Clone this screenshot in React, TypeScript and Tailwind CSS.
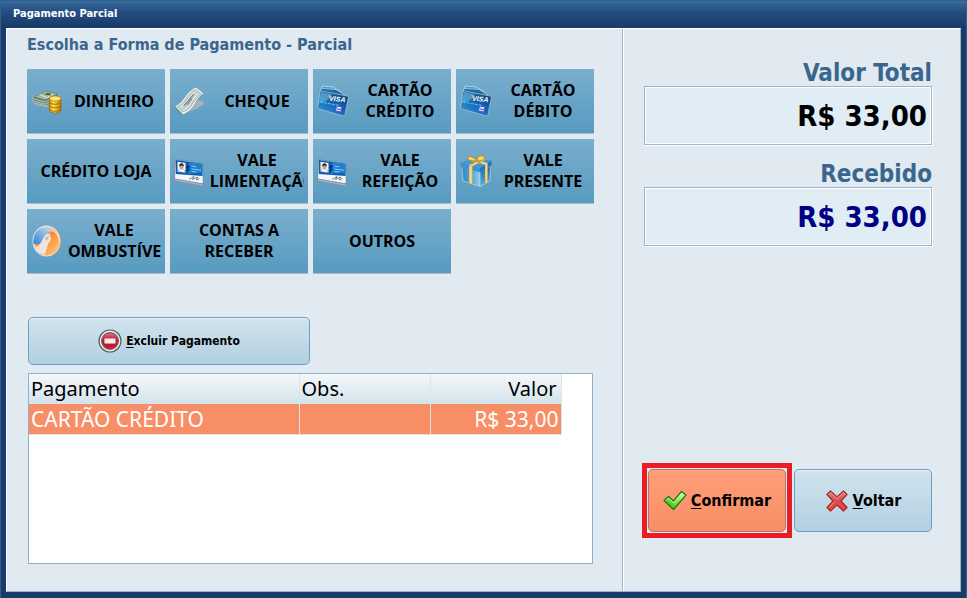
import type { ReactNode } from 'react';

function MoneyIcon() {
  return (
    <svg viewBox="0 0 32 32" className="h-8 w-8 shrink-0" aria-hidden="true">
      <defs>
        <linearGradient id="gold" x1="0" x2="1">
          <stop offset="0" stopColor="#d99a08" />
          <stop offset=".35" stopColor="#ffe45c" />
          <stop offset="1" stopColor="#b87400" />
        </linearGradient>
      </defs>
      <path d="M2 12 9 8l9-2 9 3 1 8-10 5-12-2-4-3z" fill="#6d8878" stroke="#c3d0cb" strokeWidth=".6" />
      <path d="M3 12l6-3.500 8-2.500 10 3-6 3-7 3z" fill="#a0b5a3" stroke="#4f6a58" strokeWidth=".6" />
      <path d="M9 9.500l6 3 4-1M14 7.500l8 2.500" fill="none" stroke="#d6e0d3" strokeWidth="1.200" />
      <ellipse cx="17" cy="9" rx="3" ry="1.300" fill="#4f6b58" />
      <path d="M3 14l11 3 4-2M3 16.200l11 3 4-2M4 18.200l11 2.500 3-1" fill="none" stroke="#c0cfc4" strokeWidth=".8" />
      <path d="M18.500 13.500V25c0 4 11.500 4 11.500 0V13.500z" fill="url(#gold)" stroke="#936000" strokeWidth=".7" />
      <path d="M18.500 17c1 3 10.500 3 11.500 0M18.500 20.500c1 3 10.500 3 11.500 0M18.500 24c1 3 10.500 3 11.500 0" fill="none" stroke="#a56d00" />
      <ellipse cx="24.200" cy="13.500" rx="5.700" ry="2.600" fill="#ffe679" stroke="#b07700" strokeWidth=".7" />
    </svg>
  );
}

function ChequeIcon() {
  return (
    <svg viewBox="0 0 32 32" className="h-8 w-8 shrink-0" aria-hidden="true">
      <path d="M13 27 22 15l7 1 1 3-8 5z" fill="#a8b3bc" />
      <path d="M0 21c7-2 9-7 13-12 3-3 6-6 9-7l8.500 7c-5 1-7 6-10 11-3 5-7 8-12 10z" fill="#eef4f4" stroke="#6f979d" strokeWidth=".8" />
      <path d="M3 21.500c6-2 8-7 12-12 2-2 4-4 6.500-5l6 4.500c-4 2-6 6-9 10-2 4-6 7-10 8z" fill="#c3d0d0" stroke="#86a3a6" strokeWidth=".6" />
      <path d="M6 22.500c6-3 8-10 15-15.500M9 25.500c7-3 8-11 15-16.500" fill="none" stroke="#eff5f5" strokeWidth=".9" />
      <path d="M10 20.500c4-4 6-8 10-11M13 20c2-2 3-4 5-6.500" fill="none" stroke="#75868a" strokeWidth="1.200" />
      <path d="M0 21l8.500 9" stroke="#5e9196" strokeWidth="1.400" />
    </svg>
  );
}

function VisaIcon() {
  return (
    <svg viewBox="0 0 32 32" className="h-8 w-8 shrink-0" aria-hidden="true">
      <defs>
        <linearGradient id="card" x1="0" y1="1" x2="1" y2="0">
          <stop offset="0" stopColor="#2a9fe0" />
          <stop offset=".5" stopColor="#1467b5" />
          <stop offset="1" stopColor="#0b3a78" />
        </linearGradient>
      </defs>
      <path d="M5 1l11 1 8 5-3 14L1 20z" fill="#3fa0d3" stroke="#cfdde6" strokeWidth=".8" />
      <path d="M4 3.500l15 1 8 5-4 14L1 21z" fill="#1b67a6" stroke="#b9cddb" strokeWidth=".8" />
      <path d="M4.500 6 30 11c1 0 1.500 1 1.300 2L28 29.500c-.3 1-1 1.500-2 1.300L2 24c-1-.4-1.500-1-1.300-2L3 7c.2-.7.700-1 1.500-1z" fill="url(#card)" stroke="#a9bccb" strokeWidth=".8" />
      <path d="M4 7l11 2c-2 5-6 8-13 9z" fill="#6fc6ea" opacity=".55" />
      <text x="12" y="15.500" transform="rotate(6 12 15)" fontSize="7" fontWeight="700" fontStyle="italic" fontFamily="Liberation Sans, sans-serif" fill="#fff">VISA</text>
      <path d="M11 10l2.500.5 1 3-2-.5z" fill="#f6ac38" />
      <path d="M3 17l19 3.500" stroke="#6fb4e6" strokeWidth="1.200" strokeDasharray="3 1" />
      <path d="M19.500 21l5.500 1-1 5-5.500-1z" fill="#d9e2ff" stroke="#4d57c9" />
      <path d="M20 24l4.500.7" stroke="#4d57c9" />
    </svg>
  );
}

function BadgeCardIcon() {
  return (
    <svg viewBox="0 0 32 32" className="h-8 w-8 shrink-0" aria-hidden="true">
      <path d="M1.500 4.500 28 8.500c1 .2 1.200.8 1.200 1.500v19L.5 24z" fill="#f2f6fb" stroke="#6d7f92" strokeWidth=".8" />
      <path d="M2 5l26.500 4v12L1.800 19z" fill="#0a5cb0" />
      <path d="M15 7l13.500 2v9C23 19 19 17 14 20z" fill="#1d7fd0" />
      <path d="M3.500 6.700l8 1.200v9.600l-8-.8z" fill="#f1f5f8" />
      <path d="M4 16.800c0-4 7-4 7 .6z" fill="#fff" stroke="#56768f" strokeWidth=".5" />
      <ellipse cx="7.500" cy="11.600" rx="2.100" ry="2.600" fill="#dd9a70" />
      <path d="M5.200 11.500c-.4-4.500 5-4 4.600 0-1.600-1.300-3-1.300-4.600 0z" fill="#32221b" />
      <path d="M17.500 11l5 .8M17.500 14l9.500 1.200M17.500 16.500l5 .5" stroke="#8cc8f4" />
      <path d="M12.500 13l3-2M12.500 16l3-2" stroke="#072d66" strokeWidth="1.600" />
      <path d="M15 24.500l5-3-1.500 3 5-2.500-1 3 3-1.500" fill="none" stroke="#283747" strokeWidth=".6" />
      <path d="M.5 24l28.500 5v2L1 26z" fill="#aeb6c0" stroke="#7d8794" strokeWidth=".5" />
    </svg>
  );
}

function GiftIcon() {
  return (
    <svg viewBox="0 0 32 32" className="h-8 w-8 shrink-0" aria-hidden="true">
      <defs>
        <linearGradient id="giftLeft" x1="0" x2="1">
          <stop offset="0" stopColor="#2c86c8" />
          <stop offset=".6" stopColor="#57aee2" />
          <stop offset="1" stopColor="#8ecdf0" />
        </linearGradient>
        <linearGradient id="giftRight" x1="0" x2="0" y1="0" y2="1">
          <stop offset="0" stopColor="#1667ad" />
          <stop offset="1" stopColor="#56b1e4" />
        </linearGradient>
      </defs>
      <path d="M2 12l18 5v14.500L3 26z" fill="url(#giftLeft)" stroke="#c2d3df" strokeWidth=".7" />
      <path d="M20 17l10.500-6L30 26l-10 5.500z" fill="url(#giftRight)" stroke="#c2d3df" strokeWidth=".7" />
      <path d="M.5 7.500 14 3.500l17 2-11 7.500z" fill="#4199d6" />
      <path d="M.5 7.500 20 13v4.500L1 12.500z" fill="#3b93d2" />
      <path d="M20 13l11.500-7.500v5L20 17.500z" fill="#1f74ba" />
      <path d="M9 10l3.500 1v18.500L9 28.300zM25 9.800l2.700-1.800v19.500L25 29z" fill="#f3d681" stroke="#b78928" strokeWidth=".4" />
      <path d="M9 10l13-5.500h4L12.500 11zM12 4.500l15.700 3.500L25 9.800 9 5.500z" fill="#f7dc82" />
      <path d="M16.500 6C10 6 7 5 8 2.500 9 0 15 2 16.500 6zm0 0C17 1 21-.5 24 1.500c3 2-2 5-7.500 4.500z" fill="#f6d36b" stroke="#a97922" strokeWidth=".8" />
      <path d="M15.500 6 12 9M17.500 6l4 3" stroke="#c69232" strokeWidth="1.600" />
      <circle cx="16.500" cy="5.500" r="1.700" fill="#cf942c" />
    </svg>
  );
}

function FuelIcon() {
  return (
    <svg viewBox="0 0 32 32" className="h-8 w-8 shrink-0" aria-hidden="true">
      <defs>
        <linearGradient id="ember" x1="0" x2="1" y1="0" y2="1">
          <stop offset="0" stopColor="#f3a77a" />
          <stop offset=".45" stopColor="#ff8a2b" />
          <stop offset="1" stopColor="#ffd089" />
        </linearGradient>
        <linearGradient id="sky" x1="0" x2="1" y1="1" y2="0">
          <stop offset="0" stopColor="#2a86d6" />
          <stop offset="1" stopColor="#cfe0ee" />
        </linearGradient>
      </defs>
      <ellipse cx="17" cy="16" rx="14" ry="15.500" fill="#8e99a2" />
      <ellipse cx="15.500" cy="16" rx="14" ry="15.600" fill="#dfe2e5" />
      <ellipse cx="16" cy="16.500" rx="12.500" ry="14" fill="url(#ember)" />
      <path d="M2.500 19C1.500 10 6 3 13.500 2.500 18 2 21 4 23 6c-6 0-11 6-13 13z" fill="url(#sky)" />
      <path d="M4 22c5-1 6-5 8-8.500C14 9 17 8 19 9l1 5c-.5 3-3 4-3.500 7L14 29.500C9 29 5 26 4 22z" fill="#f3e3da" />
      <path d="M14.500 12.500l3.500-2-1 4-3 1z" fill="#b3bfca" />
      <path d="M21 5c4 2 7 6 7.500 11" fill="none" stroke="#ffe2d0" strokeWidth="1.200" />
    </svg>
  );
}

function RemoveIcon() {
  return (
    <svg viewBox="0 0 24 24" className="h-6 w-6 shrink-0" aria-hidden="true">
      <defs>
        <linearGradient id="stop" x1="0" x2="0" y1="0" y2="1">
          <stop offset="0" stopColor="#e4788a" />
          <stop offset=".5" stopColor="#cf0426" />
          <stop offset="1" stopColor="#d6173b" />
        </linearGradient>
      </defs>
      <circle cx="12" cy="12" r="11" fill="#f1efee" stroke="#5f5a59" strokeWidth="1.200" />
      <circle cx="12" cy="12" r="8.300" fill="url(#stop)" stroke="#6f6464" strokeWidth="1.400" />
      <rect x="6.500" y="9.500" width="11" height="5" rx=".8" fill="#eee" stroke="#c9a0a8" strokeWidth=".7" />
    </svg>
  );
}

function CheckIcon() {
  return (
    <svg viewBox="0 0 24 24" className="h-6 w-6 shrink-0" aria-hidden="true">
      <defs>
        <linearGradient id="green" x1="1" x2="0" y1="0" y2="1">
          <stop offset="0" stopColor="#eaffcf" />
          <stop offset=".45" stopColor="#85e943" />
          <stop offset="1" stopColor="#23a80d" />
        </linearGradient>
      </defs>
      <path d="M1 11.500 5.500 7.500l5 4.500L18.500 2.500 23 6 10.500 20.500z" fill="url(#green)" stroke="#187b12" strokeWidth="1.200" strokeLinejoin="round" />
      <path d="M3 11.500 5.500 9l5 5 8-9.500" fill="none" stroke="#e2ffd1" strokeWidth=".8" />
    </svg>
  );
}

function CrossIcon() {
  return (
    <svg viewBox="0 0 24 24" className="h-6 w-6 shrink-0" aria-hidden="true">
      <defs>
        <linearGradient id="red" x1="0" x2="0" y1="0" y2="1">
          <stop offset="0" stopColor="#dc8583" />
          <stop offset=".55" stopColor="#d94a48" />
          <stop offset="1" stopColor="#f04742" />
        </linearGradient>
      </defs>
      <path d="M2 5.500 5.500 2 12 8l6.500-6L22 5.500 16 12l6 6.500-3.500 3.500L12 16l-6.500 6L2 18.500 8 12z" fill="url(#red)" stroke="#ae2525" strokeWidth="1.200" strokeLinejoin="round" />
      <path d="M3.500 5.500l2-2L12 9.500l6.500-6 2 2M4 18.500l5.500-6" fill="none" stroke="#f0b0ad" strokeWidth=".7" />
    </svg>
  );
}

type Method = { lines: string[]; icon?: ReactNode };

const methods: Method[] = [
  { lines: ['DINHEIRO'], icon: <MoneyIcon /> },
  { lines: ['CHEQUE'], icon: <ChequeIcon /> },
  { lines: ['CARTÃO', 'CRÉDITO'], icon: <VisaIcon /> },
  { lines: ['CARTÃO', 'DÉBITO'], icon: <VisaIcon /> },
  { lines: ['CRÉDITO LOJA'] },
  { lines: ['VALE', 'ALIMENTAÇÃO'], icon: <BadgeCardIcon /> },
  { lines: ['VALE', 'REFEIÇÃO'], icon: <BadgeCardIcon /> },
  { lines: ['VALE', 'PRESENTE'], icon: <GiftIcon /> },
  { lines: ['VALE', 'COMBUSTÍVEL'], icon: <FuelIcon /> },
  { lines: ['CONTAS A', 'RECEBER'] },
  { lines: ['OUTROS'] },
];

function MethodTile({ lines, icon }: Method) {
  return (
    <button
      type="button"
      className="flex h-[65px] items-center gap-1 border-b border-[#a9bccb] bg-linear-to-b from-[#7aaecd] to-[#579bc0] px-1 font-['Open_Sans',sans-serif] text-base leading-[21px] font-bold text-black"
    >
      {icon}
      <span className="flex min-w-0 flex-1 flex-col items-center overflow-hidden whitespace-nowrap">
        {lines.map((line) => (
          <span key={line}>{line}</span>
        ))}
      </span>
    </button>
  );
}

function AmountField({ id, label, color }: { id: string; label: string; color: string }) {
  return (
    <div className="flex flex-col">
      <label htmlFor={id} className="text-right text-2xl leading-[26px] font-bold text-[#3a668e]">
        {label}
      </label>
      <input
        id={id}
        readOnly
        value="R$ 33,00"
        className={`h-[59px] w-full border border-[#9ab4cf] bg-[#e0edf4] px-1 text-right text-[29px] font-bold shadow-[inset_0_0_0_1px_#fff,1px_1px_0_#fff] outline-none ${color}`}
      />
    </div>
  );
}

const blueButton =
  'flex items-center justify-center rounded-[5px] border border-[#6d9fc3] bg-linear-to-b from-[#d1e3ed] to-[#b2d0e2] font-bold text-black shadow-[inset_0_1px_0_#e7f1f6]';

export default function App() {
  return (
    <div className="flex min-h-screen flex-col border-x border-t border-[#2c628f] bg-[#183b69] font-['DejaVu_Sans_Condensed','DejaVu_Sans',sans-serif]">
      <header className="flex h-[27px] items-center bg-linear-to-b from-[#3a6c9b] from-0% via-[#234d80] via-40% to-[#183b69] px-3">
        <h1 className="text-[11px] font-bold text-white">Pagamento Parcial</h1>
      </header>
      <main className="mx-[5px] mb-[6px] flex flex-1 border border-[#9ab4cf] border-t-white border-l-white bg-[#e1e9f1]">
        <section className="flex flex-1 flex-col border-r border-[#9ab4cf] pr-7 pb-[27px] pl-5">
          <h2 className="pt-1 text-base leading-6 font-bold text-[#3a668e]">Escolha a Forma de Pagamento - Parcial</h2>
          <div className="mt-3 grid grid-cols-4 gap-[5px]">
            {methods.map((method) => (
              <MethodTile key={method.lines.join(' ')} {...method} />
            ))}
          </div>
          <button type="button" className={`${blueButton} mt-[43px] ml-px h-12 w-full max-w-[282px] gap-1 text-xs`}>
            <RemoveIcon />
            <span>
              <u className="underline-offset-2">E</u>xcluir Pagamento
            </span>
          </button>
          <div className="mx-px mt-2 flex-1 border border-[#8db2cd] bg-white">
            <table className="w-[532px] table-fixed border-collapse font-['Noto_Sans',sans-serif] text-xl text-black">
              <colgroup>
                <col className="w-[270px]" />
                <col className="w-[131px]" />
                <col className="w-[131px]" />
              </colgroup>
              <thead>
                <tr className="h-[30px] bg-linear-to-b from-[#f4f8fa] to-[#d3e3ec]">
                  <th className="border-r border-[#dbe6ee] px-[2px] py-0 text-left font-normal">Pagamento</th>
                  <th className="border-r border-[#dbe6ee] px-[2px] py-0 text-left font-normal">Obs.</th>
                  <th className="border-r border-[#dbe6ee] px-1 py-0 text-right font-normal">Valor</th>
                </tr>
              </thead>
              <tbody>
                <tr className="h-[30px] border-b border-[#dbe6ee] bg-[#f88e65] text-[21px] leading-7 text-white">
                  <td className="border-r border-[#dbe6ee] px-[2px] py-0">CARTÃO CRÉDITO</td>
                  <td className="border-r border-[#dbe6ee] px-[2px] py-0" />
                  <td className="border-r border-[#dbe6ee] px-[2px] py-0 text-right">R$ 33,00</td>
                </tr>
              </tbody>
            </table>
          </div>
        </section>
        <section className="flex w-[337px] flex-col justify-between border-l border-white pt-[31px] pr-7 pb-[53px] pl-[18px]">
          <div className="flex flex-col gap-4 pl-[2px]">
            <AmountField id="total" label="Valor Total" color="text-black" />
            <AmountField id="received" label="Recebido" color="text-[#000084]" />
          </div>
          <div className="flex items-center gap-[2px]">
            <div className="flex-1 border-[5px] border-[#ed1c24] p-px">
              <button
                type="button"
                className="flex h-[63px] w-full items-center justify-center gap-1 rounded-[5px] border border-[#a27d70] bg-linear-to-b from-[#ff9e77] to-[#f88e65] text-base font-bold text-black"
              >
                <CheckIcon />
                <span>
                  <u className="underline-offset-2">C</u>onfirmar
                </span>
              </button>
            </div>
            <button type="button" className={`${blueButton} h-[63px] w-[138px] gap-1 text-base`}>
              <CrossIcon />
              <span>
                <u className="underline-offset-2">V</u>oltar
              </span>
            </button>
          </div>
        </section>
      </main>
    </div>
  );
}
